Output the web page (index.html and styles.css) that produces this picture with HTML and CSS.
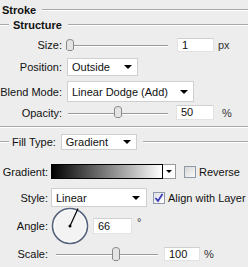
FILE: index.html
```html
<!DOCTYPE html>
<html lang="en">
<head>
    <meta charset="UTF-8">
    <title>Stroke</title>
    <link rel="stylesheet" href="styles.css">
</head>
<body>

<div class="title">
    <span class="title-text">Stroke</span>
    <span class="rule"></span>
</div>

<div class="group-head">
    <span class="rule lead"></span>
    <span class="group-text">Structure</span>
    <span class="rule"></span>
</div>

<div class="row row-size">
    <span class="label">Size:</span>
    <div class="slider">
        <span class="track"></span>
        <svg class="thumb" style="left: 0px" width="8" height="12" viewBox="0 0 8 12"><path d="M0.5 3 Q0.5 0.5 4 0.5 Q7.5 0.5 7.5 3 L7.5 10 L6 11.5 L2 11.5 L0.5 10 Z" fill="#e4e4e4" stroke="#8a8a8a"/></svg>
    </div>
    <span class="field">1</span>
    <span class="unit">px</span>
</div>

<div class="row row-position">
    <span class="label">Position:</span>
    <div class="select sel-position">
        <span>Outside</span>
        <span class="arrow"></span>
    </div>
</div>

<div class="row row-blend">
    <span class="label">Blend Mode:</span>
    <div class="select sel-blend">
        <span>Linear Dodge (Add)</span>
        <span class="arrow"></span>
    </div>
</div>

<div class="row row-opacity">
    <span class="label">Opacity:</span>
    <div class="slider">
        <span class="track"></span>
        <svg class="thumb" style="left: 48px" width="8" height="12" viewBox="0 0 8 12"><path d="M0.5 3 Q0.5 0.5 4 0.5 Q7.5 0.5 7.5 3 L7.5 10 L6 11.5 L2 11.5 L0.5 10 Z" fill="#e4e4e4" stroke="#8a8a8a"/></svg>
    </div>
    <span class="field field-op">50</span>
    <span class="unit unit-pct">%</span>
</div>

<div class="separator"></div>

<div class="fill-head">
    <span class="rule lead"></span>
    <span class="fill-label">Fill Type:</span>
    <div class="select sel-fill">
        <span>Gradient</span>
        <span class="arrow"></span>
    </div>
    <span class="rule"></span>
</div>

<div class="row frow row-gradient">
    <span class="flabel">Gradient:</span>
    <div class="gradient-bar"></div>
    <div class="gradient-btn"><span class="arrow small"></span></div>
    <span class="check"></span>
    <span class="check-text">Reverse</span>
</div>

<div class="row frow row-style">
    <span class="flabel">Style:</span>
    <div class="select sel-style">
        <span>Linear</span>
        <span class="arrow"></span>
    </div>
    <span class="check checked">
        <svg width="10" height="10" viewBox="0 0 10 10"><path d="M1.5 5 L4 8 L8.5 1" fill="none" stroke="#3b3bb8" stroke-width="1.8"/></svg>
    </span>
    <span class="check-text">Align with Layer</span>
</div>

<div class="row frow row-angle">
    <span class="flabel">Angle:</span>
    <svg class="dial" width="38" height="38" viewBox="0 0 38 38">
        <circle cx="19" cy="19" r="17.5" fill="#f3f3f3" stroke="#56647e" stroke-width="1.6"/>
        <circle cx="19" cy="19" r="16" fill="none" stroke="#ffffff" stroke-width="0.8"/>
        <line x1="19" y1="19" x2="27" y2="1.5" stroke="#000" stroke-width="1.2"/>
        <circle cx="19" cy="19" r="1.5" fill="#000"/>
    </svg>
    <span class="field field-angle">66</span>
    <span class="unit deg">°</span>
</div>

<div class="row frow row-scale">
    <span class="flabel">Scale:</span>
    <div class="slider slider-scale">
        <span class="track"></span>
        <svg class="thumb" style="left: 58px" width="8" height="14" viewBox="0 0 8 14"><path d="M0.5 3 Q0.5 0.5 4 0.5 Q7.5 0.5 7.5 3 L7.5 12 L6 13.5 L2 13.5 L0.5 12 Z" fill="#e4e4e4" stroke="#8a8a8a"/></svg>
    </div>
    <span class="field field-scale">100</span>
    <span class="unit unit-scale">%</span>
</div>

</body>
</html>
```

FILE: styles.css
```css
body {
    margin: 0;
    width: 248px;
    height: 267px;
    overflow: hidden;
    background: #ededed;
    color: #111;
    font-family: "Liberation Sans", Arial, sans-serif;
    font-size: 11px;
}
.rule {
    flex: 1;
    height: 0;
    border-top: 1px solid #a9a9a9;
    border-bottom: 1px solid #ffffff;
}
.rule.lead {
    flex: none;
    width: 9px;
}
.title {
    display: flex;
    align-items: center;
    height: 13px;
    margin-top: 3px;
    padding-left: 2px;
    font-weight: bold;
}
.title-text {
    margin-right: 6px;
}
.group-head {
    display: flex;
    align-items: center;
    height: 13px;
    margin-top: 2px;
    font-weight: bold;
}
.group-text {
    margin: 0 6px 0 4px;
}
.row {
    display: flex;
    align-items: center;
}
.label {
    width: 62px;
    text-align: right;
    margin-right: 4px;
}
.row-size {
    height: 14px;
    margin-top: 7px;
}
.row-position {
    height: 18px;
    margin-top: 6px;
}
.row-blend {
    height: 21px;
    margin-top: 5px;
}
.row-opacity {
    height: 15px;
    margin-top: 3px;
}
.slider {
    position: relative;
    width: 102px;
    height: 100%;
}
.track {
    position: absolute;
    left: 2px;
    right: 0;
    top: 50%;
    height: 0;
    border-top: 1px solid #9a9a9a;
    border-bottom: 1px solid #ffffff;
}
.thumb {
    position: absolute;
    top: 1px;
}
.field {
    box-sizing: border-box;
    width: 37px;
    height: 14px;
    margin-left: 9px;
    padding-left: 4px;
    line-height: 13px;
    background: #fff;
    border: 1px solid #e2e2e2;
    border-top-color: #cfcfcf;
}
.field-op {
    height: 15px;
    margin-left: 8px;
    width: 38px;
}
.unit {
    margin-left: 4px;
    color: #333;
}
.unit-pct {
    margin-left: 8px;
}
.select {
    box-sizing: border-box;
    display: flex;
    align-items: center;
    justify-content: space-between;
    height: 100%;
    margin-left: 1px;
    padding: 0 5px 0 4px;
    background: #fff;
    border: 1px solid #cfcfcf;
}
.arrow {
    width: 0;
    height: 0;
    border-left: 4px solid transparent;
    border-right: 4px solid transparent;
    border-top: 4px solid #000;
}
.arrow.small {
    border-left-width: 3px;
    border-right-width: 3px;
    border-top-width: 3px;
}
.sel-position {
    width: 71px;
}
.sel-blend {
    width: 127px;
}
.separator {
    height: 0;
    margin-top: 6px;
    border-top: 1px solid #a9a9a9;
    border-bottom: 1px solid #ffffff;
}
.fill-head {
    display: flex;
    align-items: center;
    height: 16px;
    margin-top: 6px;
}
.fill-label {
    margin: 0 4px 0 3px;
}
.sel-fill {
    flex: none;
    width: 76px;
    margin-right: 6px;
}
.frow .flabel {
    width: 48px;
    text-align: right;
    margin-right: 3px;
}
.row-gradient {
    height: 15px;
    margin-top: 14px;
}
.gradient-bar {
    box-sizing: border-box;
    width: 112px;
    height: 100%;
    border: 1px solid #000;
    background: linear-gradient(90deg, #000 0%, #ffffff 100%);
}
.gradient-btn {
    box-sizing: border-box;
    display: flex;
    align-items: center;
    justify-content: center;
    width: 13px;
    height: 100%;
    background: #fff;
    border: 1px solid #9a9a9a;
    border-left: none;
}
.check {
    box-sizing: border-box;
    display: flex;
    align-items: center;
    justify-content: center;
    width: 12px;
    height: 12px;
    margin-left: 8px;
    background: linear-gradient(135deg, #d6d6d6, #fafafa);
    border: 1px solid #8f9aa8;
}
.check.checked {
    margin-left: 6px;
    background: linear-gradient(135deg, #e0e0e8, #ffffff);
}
.check-text {
    margin-left: 3px;
}
.row-style {
    height: 19px;
    margin-top: 9px;
}
.sel-style {
    width: 96px;
    margin-left: 0;
    padding-right: 6px;
}
.row-angle {
    height: 38px;
    margin-top: 0;
}
.dial {
    margin-left: 0;
}
.field-angle {
    width: 39px;
    height: 16px;
    margin-left: 4px;
    line-height: 15px;
}
.deg {
    align-self: flex-start;
    margin-top: 9px;
    margin-left: 5px;
}
.row-scale {
    height: 15px;
    margin-top: 1px;
}
.slider-scale {
    width: 104px;
    margin-left: 3px;
}
.field-scale {
    width: 36px;
    margin-left: 6px;
}
.unit-scale {
    margin-left: 4px;
}
```
